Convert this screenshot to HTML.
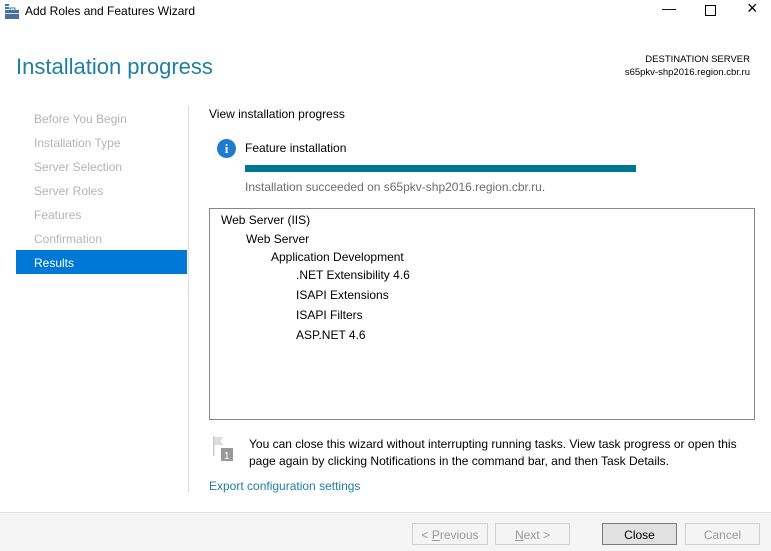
<!DOCTYPE html>
<html><head><style>
body{margin:0;width:771px;height:550px;background:#fff;font-family:"Liberation Sans",sans-serif;position:relative;overflow:hidden;color:#000}
.a{position:absolute;white-space:nowrap}
.nav{font-size:12px;color:#b4b4b4;left:34px}
.t{font-size:12px}
.b{font-size:12px;font-weight:bold;color:#222}
.btn{position:absolute;top:523px;height:22px;width:74px;border:1px solid #cfcfcf;background:#f4f4f4;font-size:12px;color:#9a9a9a;text-align:center;line-height:22px;box-sizing:border-box}
</style></head><body>
<svg class="a" style="left:4px;top:4px" width="16" height="16"><rect x="1" y="0" width="4" height="2" fill="#1e7bd2"/><rect x="1" y="3" width="4" height="2" fill="#1e7bd2"/><rect x="1" y="6" width="14" height="9" fill="#4a6f9a"/><rect x="6" y="4" width="5" height="3" fill="none" stroke="#4a6f9a"/><rect x="1" y="9" width="14" height="1" fill="#cfe0f0"/></svg>
<div class="a t" style="left:25px;top:4px;font-size:12px">Add Roles and Features Wizard</div>
<div class="a" style="left:662px;top:0;font-size:14px">&#8212;</div>
<div class="a" style="left:705px;top:5px;width:9px;height:9px;border:1px solid #000"></div>
<div class="a" style="left:747px;top:-2px;font-size:18px">&#215;</div>
<div class="a" style="left:16px;top:54px;font-size:22px;color:#1f7fa0">Installation progress</div>
<div class="a" style="right:21px;top:53px;font-size:9.5px;text-align:right;line-height:13px">DESTINATION SERVER<br>s65pkv-shp2016.region.cbr.ru</div>
<div class="a nav" style="top:112px">Before You Begin</div>
<div class="a nav" style="top:136px">Installation Type</div>
<div class="a nav" style="top:160px">Server Selection</div>
<div class="a nav" style="top:184px">Server Roles</div>
<div class="a nav" style="top:208px">Features</div>
<div class="a nav" style="top:232px">Confirmation</div>
<div class="a" style="left:16px;top:250px;width:171px;height:24px;background:#0078d7"></div>
<div class="a nav" style="top:256px;color:#fff">Results</div>
<div class="a" style="left:188px;top:106px;width:1px;height:386px;background:#dcdcdc"></div>
<div class="a t" style="left:209px;top:107px">View installation progress</div>
<div class="a" style="left:217px;top:139px;width:19px;height:19px;border-radius:50%;background:#1e7bd2;color:#fff;font-weight:bold;font-size:13px;text-align:center;line-height:19px;font-family:'Liberation Serif',serif">i</div>
<div class="a t" style="left:245px;top:141px">Feature installation</div>
<div class="a" style="left:245px;top:165px;width:391px;height:7px;background:#007694"></div>
<div class="a t" style="left:245px;top:180px;color:#6d6d6d">Installation succeeded on s65pkv-shp2016.region.cbr.ru.</div>
<div class="a" style="left:209px;top:208px;width:546px;height:212px;border:1px solid #828790;box-sizing:border-box"></div>
<div class="a t" style="left:221px;top:213px">Web Server (IIS)</div>
<div class="a t" style="left:246px;top:232px">Web Server</div>
<div class="a t" style="left:271px;top:250px">Application Development</div>
<div class="a t" style="left:296px;top:268px">.NET Extensibility 4.6</div>
<div class="a t" style="left:296px;top:288px">ISAPI Extensions</div>
<div class="a t" style="left:296px;top:308px">ISAPI Filters</div>
<div class="a t" style="left:296px;top:328px">ASP.NET 4.6</div>
<svg class="a" style="left:212px;top:436px" width="24" height="26"><rect x="1" y="0" width="1.5" height="20" fill="#ccc"/><path d="M2.5 1h9l-3 4 3 4h-9z" fill="#ddd"/><rect x="9" y="12" width="12" height="13" fill="#999"/><text x="12" y="23" font-size="10" fill="#fff" font-family="Liberation Sans">1</text></svg>
<div class="a t" style="left:249px;top:436px;line-height:17px">You can close this wizard without interrupting running tasks. View task progress or open this<br>page again by clicking Notifications in the command bar, and then Task Details.</div>
<div class="a t" style="left:209px;top:479px;color:#1f7fa0">Export configuration settings</div>
<div class="a" style="left:0;top:512px;width:771px;height:38px;background:#f5f5f5;border-top:1px solid #dfdfdf"></div>
<div class="btn" style="left:412px;width:76px">&lt; <u>P</u>revious</div>
<div class="btn" style="left:495px;width:75px"><u>N</u>ext &gt;</div>
<div class="btn" style="left:602px;width:75px;border-color:#7a7a7a;background:#e1e1e1;color:#000">Close</div>
<div class="btn" style="left:685px;width:75px">Cancel</div>
</body></html>
